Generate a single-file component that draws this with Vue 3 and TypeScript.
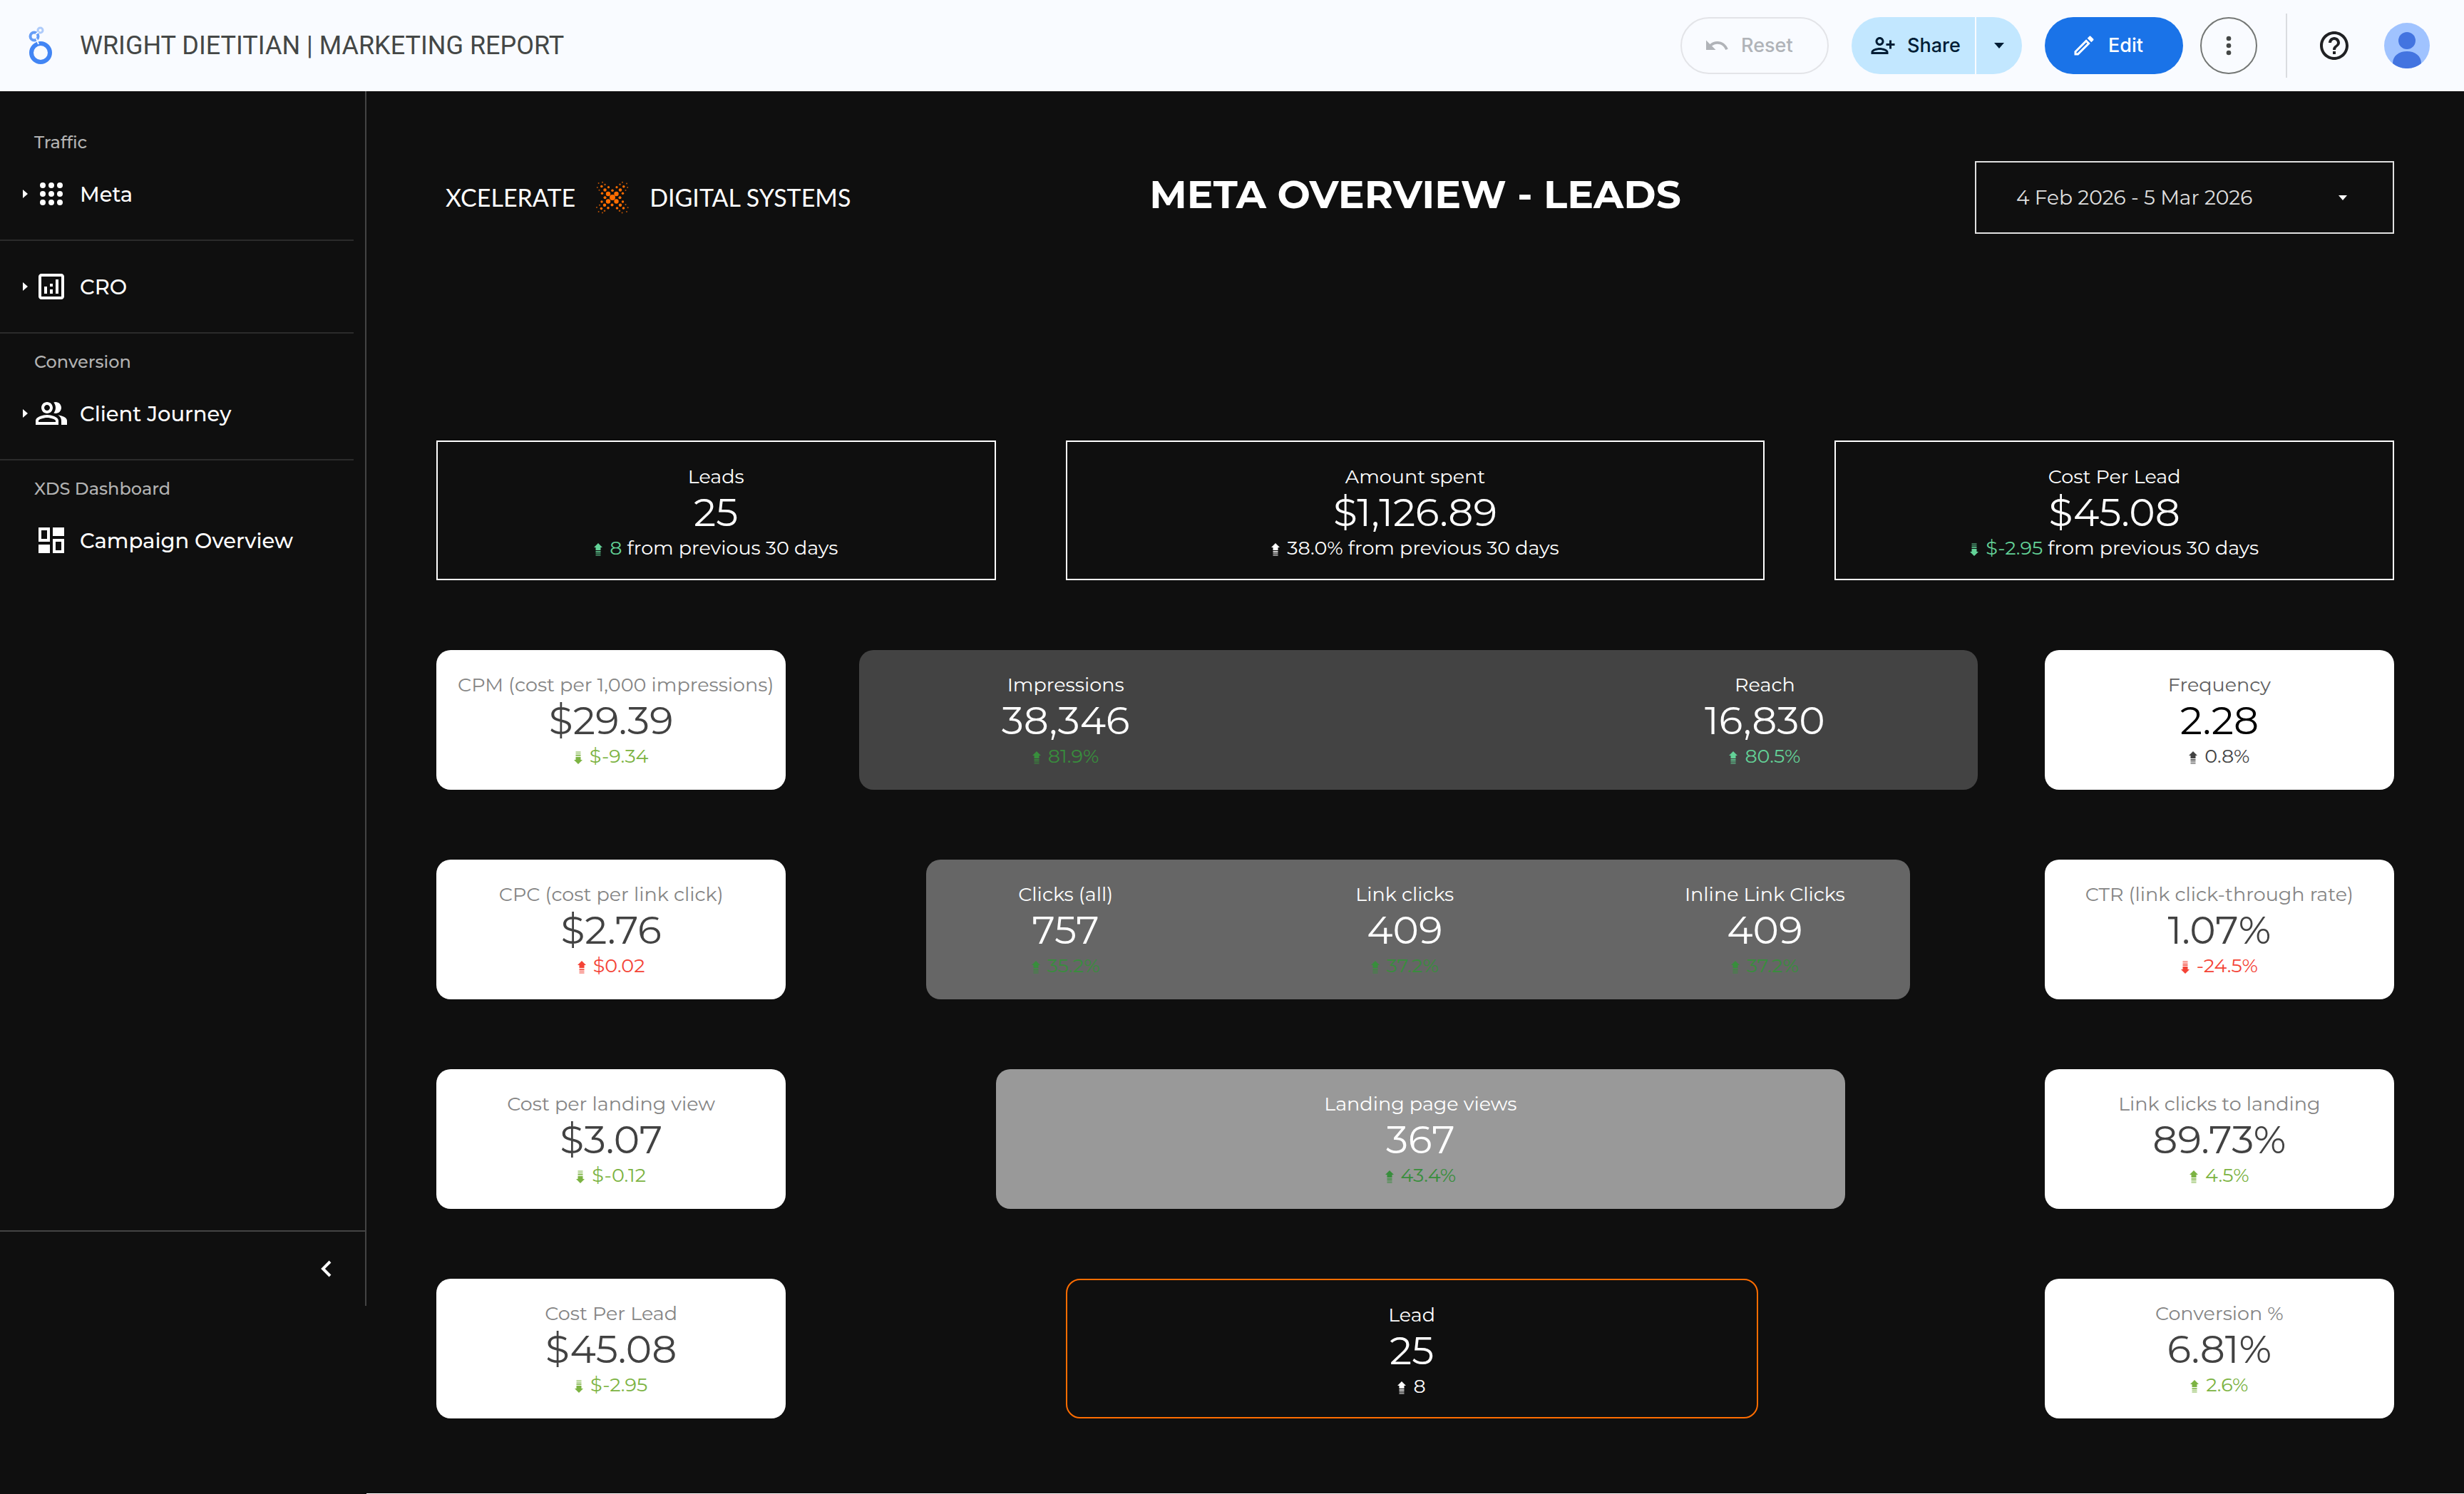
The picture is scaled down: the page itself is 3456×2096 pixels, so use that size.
<script setup lang="ts">
interface Metric {
  label: string
  value: string
  delta: string
  dir: 'up' | 'down'
  tone: string
  note?: string
  strong?: boolean
  col?: number
}

interface Panel {
  kind: string
  tracks?: string
  col: number
  metrics: Metric[]
}

interface Row {
  tracks: string
  panels: Panel[]
}

const rows: Row[] = [
  {
    tracks: '320fr 40fr 400fr 40fr 320fr',
    panels: [
      { kind: 'outline', col: 1, metrics: [{ label: 'Leads', value: '25', delta: '8', dir: 'up', tone: 'mint', note: 'from previous 30 days' }] },
      { kind: 'outline', col: 3, metrics: [{ label: 'Amount spent', value: '$1,126.89', delta: '38.0%', dir: 'up', tone: 'plain', note: 'from previous 30 days' }] },
      { kind: 'outline', col: 5, metrics: [{ label: 'Cost Per Lead', value: '$45.08', delta: '$-2.95', dir: 'down', tone: 'mint', note: 'from previous 30 days' }] },
    ],
  },
  {
    tracks: '200fr 42fr 640fr 38fr 200fr',
    panels: [
      { kind: 'light', col: 1, metrics: [{ label: 'CPM (cost per 1,000 impressions)', value: '$29.39', delta: '$-9.34', dir: 'down', tone: 'lime' }] },
      {
        kind: 'stage-one',
        col: 3,
        tracks: '236fr 160fr 244fr',
        metrics: [
          { label: 'Impressions', value: '38,346', delta: '81.9%', dir: 'up', tone: 'forest', col: 1 },
          { label: 'Reach', value: '16,830', delta: '80.5%', dir: 'up', tone: 'mint', col: 3 },
        ],
      },
      { kind: 'light', col: 5, metrics: [{ label: 'Frequency', value: '2.28', delta: '0.8%', dir: 'up', tone: 'slate', strong: true }] },
    ],
  },
  {
    tracks: '200fr 80fr 563fr 77fr 200fr',
    panels: [
      { kind: 'light', col: 1, metrics: [{ label: 'CPC (cost per link click)', value: '$2.76', delta: '$0.02', dir: 'up', tone: 'red' }] },
      {
        kind: 'stage-two',
        col: 3,
        tracks: '160fr 228fr 9fr 166fr',
        metrics: [
          { label: 'Clicks (all)', value: '757', delta: '35.2%', dir: 'up', tone: 'forest', col: 1 },
          { label: 'Link clicks', value: '409', delta: '37.2%', dir: 'up', tone: 'forest', col: 2 },
          { label: 'Inline Link Clicks', value: '409', delta: '37.2%', dir: 'up', tone: 'forest', col: 4 },
        ],
      },
      { kind: 'light', col: 5, metrics: [{ label: 'CTR (link click-through rate)', value: '1.07%', delta: '-24.5%', dir: 'down', tone: 'red' }] },
    ],
  },
  {
    tracks: '200fr 120fr 486fr 114fr 200fr',
    panels: [
      { kind: 'light', col: 1, metrics: [{ label: 'Cost per landing view', value: '$3.07', delta: '$-0.12', dir: 'down', tone: 'lime' }] },
      { kind: 'stage-three', col: 3, metrics: [{ label: 'Landing page views', value: '367', delta: '43.4%', dir: 'up', tone: 'forest' }] },
      { kind: 'light', col: 5, metrics: [{ label: 'Link clicks to landing', value: '89.73%', delta: '4.5%', dir: 'up', tone: 'lime' }] },
    ],
  },
  {
    tracks: '200fr 160fr 396fr 164fr 200fr',
    panels: [
      { kind: 'light', col: 1, metrics: [{ label: 'Cost Per Lead', value: '$45.08', delta: '$-2.95', dir: 'down', tone: 'lime' }] },
      { kind: 'goal', col: 3, metrics: [{ label: 'Lead', value: '25', delta: '8', dir: 'up', tone: 'plain' }] },
      { kind: 'light', col: 5, metrics: [{ label: 'Conversion %', value: '6.81%', delta: '2.6%', dir: 'up', tone: 'lime' }] },
    ],
  },
]

interface NavGroup {
  title?: string
  name: string
  expandable: boolean
  icon: string
}

const nav: NavGroup[] = [
  {
    title: 'Traffic',
    name: 'Meta',
    expandable: true,
    icon: 'M4 6a2 2 0 1 0 4 0a2 2 0 1 0-4 0zM10 6a2 2 0 1 0 4 0a2 2 0 1 0-4 0zM16 6a2 2 0 1 0 4 0a2 2 0 1 0-4 0zM4 12a2 2 0 1 0 4 0a2 2 0 1 0-4 0zM10 12a2 2 0 1 0 4 0a2 2 0 1 0-4 0zM16 12a2 2 0 1 0 4 0a2 2 0 1 0-4 0zM4 18a2 2 0 1 0 4 0a2 2 0 1 0-4 0zM10 18a2 2 0 1 0 4 0a2 2 0 1 0-4 0zM16 18a2 2 0 1 0 4 0a2 2 0 1 0-4 0z',
  },
  {
    name: 'CRO',
    expandable: true,
    icon: 'M19 3H5c-1.1 0-2 .9-2 2v14c0 1.1.9 2 2 2h14c1.1 0 2-.9 2-2V5c0-1.1-.9-2-2-2zm0 16H5V5h14v14zM7 12h2v5H7zM15 7h2v10h-2zM11 14h2v3h-2zM11 10h2v2h-2z',
  },
  {
    title: 'Conversion',
    name: 'Client Journey',
    expandable: true,
    icon: 'M16.67 13.13C18.04 14.06 19 15.32 19 17v3h4v-3c0-2.18-3.57-3.47-6.33-3.87zM15 12c2.21 0 4-1.79 4-4s-1.79-4-4-4c-.47 0-.91.1-1.33.24C14.5 5.27 15 6.58 15 8s-.5 2.73-1.33 3.76c.42.14.86.24 1.33.24zM9 12c2.21 0 4-1.79 4-4s-1.79-4-4-4-4 1.79-4 4 1.79 4 4 4zm0-6c1.1 0 2 .9 2 2s-.9 2-2 2-2-.9-2-2 .9-2 2-2zM9 13c-2.67 0-8 1.34-8 4v3h16v-3c0-2.66-5.33-4-8-4zm6 5H3v-.99C3.2 16.29 6.3 15 9 15s5.8 1.29 6 2v1z',
  },
  {
    title: 'XDS Dashboard',
    name: 'Campaign Overview',
    expandable: false,
    icon: 'M3 3v10h8V3H3zm6 8H5V5h4v6zM3 15h8v6H3zM13 3h8v6h-8zM13 11v10h8V11h-8zm6 8h-4v-6h4v6z',
  },
]

// [x, y, radius] of every dot in the brand mark
const dots: number[][] = [
  [23, 23, 4], [17, 18, 3.2], [28.5, 18, 3.2], [17, 28.5, 3.2], [28.5, 28.5, 3.2],
  [23, 13.3, 1.8], [33.5, 23.3, 2], [12.5, 23.3, 2], [22.5, 33.5, 2],
  [29, 8.7, 1.6], [17.5, 8.7, 1.6], [29.5, 38, 1.8], [17, 37.8, 1.8],
  [12.5, 12.5, 2.2], [34, 12.5, 2.2], [12, 33.7, 2.2], [34, 33.7, 2.2],
  [8.5, 17.3, 1.7], [37.5, 17.3, 1.7], [8, 29, 1.7], [37.5, 29, 1.7],
  [7.8, 7.5, 1.8], [38.8, 7.8, 1.8], [7.4, 38.6, 1.8], [38.5, 38, 1.8],
  [12.5, 5, 1.3], [33.5, 4.8, 1.3], [12, 41.8, 1.3], [33, 41.8, 1.3],
  [3.6, 3, 1], [9, 1.7, 1], [37, 1.7, 1], [43, 3.6, 1], [1.8, 9, 1], [44.2, 9, 1], [4.5, 12.7, 1], [41.5, 13, 1],
  [1, 37, 1], [3.6, 43, 1], [9, 44.5, 1], [36.6, 44.6, 1], [43, 43, 1], [44.6, 37.3, 1], [5, 33.7, 1], [41.5, 33, 1],
]
</script>

<template>
  <div class="page">
    <header class="topbar">
      <svg class="product" viewBox="0 0 34 54" aria-hidden="true">
        <circle cx="17" cy="37" r="13" fill="none" stroke="#4285f4" stroke-width="6" />
        <circle cx="8" cy="14" r="5.5" fill="none" stroke="#669df6" stroke-width="4" />
        <circle cx="16.5" cy="5.5" r="3.5" fill="none" stroke="#aecbfa" stroke-width="3" />
        <path d="M11 17l3 8M10 11l4-3" stroke="#f9fbff" stroke-width="2" />
      </svg>
      <h1 class="doc-title">WRIGHT DIETITIAN | MARKETING REPORT</h1>
      <div class="actions">
        <button class="pill reset" type="button" disabled>
          <svg class="glyph" viewBox="0 0 24 24"><path d="M12.5 8c-2.65 0-5.05.99-6.9 2.6L2 7v9h9l-3.62-3.62c1.39-1.16 3.16-1.88 5.12-1.88 3.54 0 6.55 2.31 7.6 5.5l2.37-.78C21.08 11.03 17.15 8 12.5 8z" /></svg>
          Reset
        </button>
        <div class="split">
          <button class="share" type="button">
            <svg class="glyph" viewBox="0 0 24 24"><path d="M13 8c0-2.21-1.79-4-4-4S5 5.79 5 8s1.79 4 4 4 4-1.79 4-4zm-2 0c0 1.1-.9 2-2 2s-2-.9-2-2 .9-2 2-2 2 .9 2 2zM1 18v2h16v-2c0-2.66-5.33-4-8-4s-8 1.34-8 4zm2 0c.2-.71 3.3-2 6-2 2.69 0 5.77 1.28 6 2H3zM20 15v-3h3v-2h-3V7h-2v3h-3v2h3v3h2z" /></svg>
            Share
          </button>
          <button class="share-more" type="button" aria-label="Share options">
            <svg class="caret" viewBox="0 0 14 8"><path d="M0 0h14L7 8z" /></svg>
          </button>
        </div>
        <button class="pill edit" type="button">
          <svg class="glyph" viewBox="0 0 24 24"><path d="M14.06 9.02l.92.92L5.92 19H5v-.92l9.06-9.06M17.66 3c-.25 0-.51.1-.7.29l-1.83 1.83 3.75 3.75 1.83-1.83c.39-.39.39-1.02 0-1.41l-2.34-2.34c-.2-.2-.45-.29-.71-.29zm-3.6 3.19L3 17.25V21h3.75L17.81 9.94l-3.75-3.75z" /></svg>
          Edit
        </button>
        <button class="more" type="button" aria-label="More options">
          <svg viewBox="0 0 24 24"><circle cx="12" cy="6" r="2" /><circle cx="12" cy="12" r="2" /><circle cx="12" cy="18" r="2" /></svg>
        </button>
        <span class="rule"></span>
        <button class="help" type="button" aria-label="Help">
          <svg viewBox="0 0 24 24"><path d="M11 18h2v-2h-2v2zm1-16C6.48 2 2 6.48 2 12s4.48 10 10 10 10-4.48 10-10S17.52 2 12 2zm0 18c-4.41 0-8-3.59-8-8s3.59-8 8-8 8 3.59 8 8-3.59 8-8 8zm0-14c-2.21 0-4 1.79-4 4h2c0-1.1.9-2 2-2s2 .9 2 2c0 2-3 1.75-3 5h2c0-2.25 3-2.5 3-5 0-2.21-1.79-4-4-4z" /></svg>
        </button>
        <button class="avatar" type="button" aria-label="Account">
          <svg viewBox="0 0 64 64">
            <circle cx="32" cy="32" r="32" fill="#a0c3ff" />
            <circle cx="32" cy="25" r="12" fill="#4374e0" />
            <path d="M12 57c0-11 9-17 20-17s20 6 20 17a32 32 0 0 1-40 0z" fill="#4374e0" />
          </svg>
        </button>
      </div>
    </header>

    <div class="body">
      <aside class="sidebar">
        <nav class="nav">
          <section v-for="group in nav" :key="group.name" class="group">
            <h2 v-if="group.title" class="group-title">{{ group.title }}</h2>
            <a class="item" href="#">
              <span class="expander"><svg v-if="group.expandable" class="arrow" viewBox="0 0 7 12"><path d="M0 0l7 6-7 6z" /></svg></span>
              <svg class="nav-icon" viewBox="0 0 24 24"><path fill-rule="evenodd" :d="group.icon" /></svg>
              <span>{{ group.name }}</span>
            </a>
          </section>
        </nav>
        <div class="collapse-bar">
          <button class="collapse" type="button" aria-label="Collapse navigation">
            <svg viewBox="0 0 24 24"><path d="M15 7l-5 5 5 5" /></svg>
          </button>
        </div>
      </aside>

      <main class="report">
        <div class="report-head">
          <div class="brand">
            <span>XCELERATE</span>
            <svg class="mark" viewBox="0 0 46 46" aria-hidden="true">
              <circle v-for="(d, i) in dots" :key="i" :cx="d[0]" :cy="d[1]" :r="d[2]" :opacity="d[2] < 1.5 ? 0.7 : 1" />
            </svg>
            <span>DIGITAL SYSTEMS</span>
          </div>
          <h2 class="report-title">META OVERVIEW - LEADS</h2>
          <button class="date" type="button">
            4 Feb 2026 - 5 Mar 2026
            <svg class="date-caret" viewBox="0 0 14 8"><path d="M0 0h14L7 8z" /></svg>
          </button>
        </div>

        <div v-for="(row, r) in rows" :key="r" class="row" :style="{ gridTemplateColumns: row.tracks }">
          <section
            v-for="panel in row.panels"
            :key="panel.col"
            class="panel"
            :class="panel.kind"
            :style="{ gridColumn: panel.col, gridTemplateColumns: panel.tracks ?? '100%' }"
          >
            <div v-for="m in panel.metrics" :key="m.label" class="metric" :class="{ strong: m.strong }" :style="{ gridColumn: m.col ?? 1 }">
              <div class="label">{{ m.label }}</div>
              <div class="value">{{ m.value }}</div>
              <div class="delta">
                <span class="change" :class="m.tone">
                  <svg class="trend" viewBox="0 0 12 18">
                    <g :transform="m.dir === 'down' ? 'rotate(180 6 9)' : undefined">
                      <path d="M6 0l6 6H9.500v4h-7V6H0z" />
                      <path d="M2.500 11h7v2h-7z" opacity=".8" />
                      <path d="M2.500 13.500h7v2h-7z" opacity=".6" />
                      <path d="M2.500 16h7v2h-7z" opacity=".5" />
                    </g>
                  </svg>
                  {{ m.delta }}</span>
                <span v-if="m.note">&nbsp;{{ m.note }}</span>
              </div>
            </div>
          </section>
        </div>
      </main>
    </div>
  </div>
</template>

<style>
body {
  margin: 0;
  background: #0f0f0f;
}
</style>

<style scoped>
.page {
  display: flex;
  flex-direction: column;
  min-height: 100vh;
  background: #0f0f0f;
  color: #fff;
  font-family: Montserrat, Inter, sans-serif;
}

.page *,
.page {
  box-sizing: border-box;
}

button {
  margin: 0;
  padding: 0;
  border: 0;
  background: none;
  color: inherit;
  font: inherit;
}

h1,
h2 {
  margin: 0;
}

svg {
  display: block;
  flex: none;
}

/* Top bar */
.topbar {
  display: flex;
  align-items: center;
  height: 128px;
  padding: 0 48px 0 40px;
  background: #f9fbff;
  color: #202124;
}

.product {
  width: 34px;
  height: 54px;
}

.doc-title {
  margin-left: 38px;
  color: #444746;
  font: 400 36px/48px Roboto, sans-serif;
}

.actions {
  display: flex;
  align-items: center;
  margin-left: auto;
  font: 500 27px/40px Inter, sans-serif;
}

.glyph {
  width: 36px;
  height: 36px;
  fill: currentColor;
}

.pill {
  display: flex;
  align-items: center;
  height: 80px;
  border-radius: 40px;
}

.reset {
  gap: 16px;
  width: 208px;
  padding-left: 31px;
  border: 2px solid #e3e4e8;
  color: #b0b3b8;
}

.split {
  display: flex;
  gap: 2px;
  margin-left: 32px;
  color: #001d35;
}

.share,
.share-more {
  display: flex;
  align-items: center;
  height: 80px;
  background: #c2e7ff;
}

.share {
  gap: 16px;
  width: 173px;
  padding-left: 26px;
  border-radius: 40px 0 0 40px;
}

.share-more {
  justify-content: center;
  width: 64px;
  border-radius: 0 40px 40px 0;
}

.caret {
  width: 14px;
  height: 8px;
  fill: currentColor;
}

.edit {
  gap: 16px;
  width: 194px;
  margin-left: 32px;
  padding-left: 37px;
  background: #1a73e8;
  color: #fff;
}

.more {
  display: grid;
  place-items: center;
  width: 80px;
  height: 80px;
  margin-left: 24px;
  border: 2px solid #747775;
  border-radius: 50%;
}

.more svg {
  width: 40px;
  height: 40px;
  fill: #444746;
}

.rule {
  width: 2px;
  height: 90px;
  margin: 0 42px 0 40px;
  background: #dadce0;
}

.help svg {
  width: 48px;
  height: 48px;
  fill: #202124;
}

.avatar {
  margin-left: 46px;
}

.avatar svg {
  width: 64px;
  height: 64px;
}

/* Sidebar */
.body {
  display: flex;
  flex: 1;
}

.sidebar {
  display: flex;
  flex: none;
  flex-direction: column;
  width: 514px;
  height: calc(100vh - 392px);
  border-right: 2px solid #444;
}

.nav {
  flex: 1;
  padding: 32px 16px 0 0;
}

.group {
  padding: 16px 0;
  border-bottom: 2px solid #2b2b2b;
}

.group:last-child {
  border-bottom: 0;
}

.group-title {
  padding-left: 48px;
  color: #b3b3b3;
  font-size: 24px;
  font-weight: 500;
  line-height: 48px;
}

.item {
  display: flex;
  align-items: center;
  height: 96px;
  color: #fff;
  font-size: 29px;
  font-weight: 500;
  text-decoration: none;
}

.expander {
  width: 48px;
  padding-left: 32px;
}

.arrow {
  width: 7px;
  height: 12px;
  fill: #fff;
}

.nav-icon {
  width: 48px;
  height: 48px;
  margin-right: 16px;
  fill: #fff;
}

.collapse-bar {
  display: flex;
  justify-content: flex-end;
  align-items: center;
  height: 106px;
  padding-right: 31px;
  border-top: 2px solid #444;
}

.collapse svg {
  width: 48px;
  height: 48px;
  fill: none;
  stroke: #fff;
  stroke-width: 2;
}

/* Report */
.report {
  flex: 1;
  min-width: 0;
  padding: 98px 98px 100px;
  border-bottom: 1px solid #fff;
}

.report-head {
  display: grid;
  grid-template-columns: 588fr 1570fr 588fr;
  align-items: center;
  height: 102px;
  margin-bottom: 290px;
}

.brand {
  display: flex;
  align-items: center;
  gap: 29px;
  padding-left: 13px;
  font: 400 34px/48px Lato, sans-serif;
  white-space: nowrap;
}

.mark {
  width: 46px;
  height: 46px;
  fill: #ff6d00;
}

.report-title {
  padding-bottom: 8px;
  font-size: 55px;
  font-weight: 700;
  line-height: 64px;
  text-align: center;
  white-space: nowrap;
}

.date {
  display: flex;
  align-items: center;
  justify-content: space-between;
  height: 102px;
  padding: 0 64px 0 56px;
  border: 2px solid #e0e0e0;
  color: #e0e0e0;
  font-size: 28px;
}

.date-caret {
  width: 12px;
  height: 7px;
  fill: #fff;
}

.row {
  display: grid;
}

.row + .row {
  margin-top: 98px;
}

.panel {
  display: grid;
  min-width: 0;
  height: 196px;
  padding-top: 32px;
  border-radius: 20px;
}

.outline {
  border: 2px solid #fff;
  border-radius: 0;
}

.light {
  background: #fff;
  color: #424242;
}

.stage-one {
  background: #434343;
}

.stage-two {
  background: #666;
}

.stage-three {
  background: #999;
}

.goal {
  border: 2px solid #ff6d01;
}

.metric {
  text-align: center;
  white-space: nowrap;
}

.light .metric {
  padding: 0 30px;
}

.label,
.delta {
  font-size: 27px;
  line-height: 34px;
}

.light .label {
  color: #858585;
}

.light .strong .label {
  color: #616161;
}

.value {
  font-size: 55px;
  line-height: 66px;
}

.strong .value {
  color: #000;
}

.delta,
.change {
  display: flex;
  justify-content: center;
  align-items: center;
}

.change {
  gap: 10px;
}

.trend {
  width: 12px;
  height: 18px;
  margin-top: 4px;
  fill: currentColor;
}

.mint {
  color: #63d297;
}

.lime {
  color: #7cb342;
}

.forest {
  color: #388e3c;
}

.red {
  color: #f44336;
}

.slate {
  color: #424242;
}

.plain {
  color: #fff;
}
</style>
